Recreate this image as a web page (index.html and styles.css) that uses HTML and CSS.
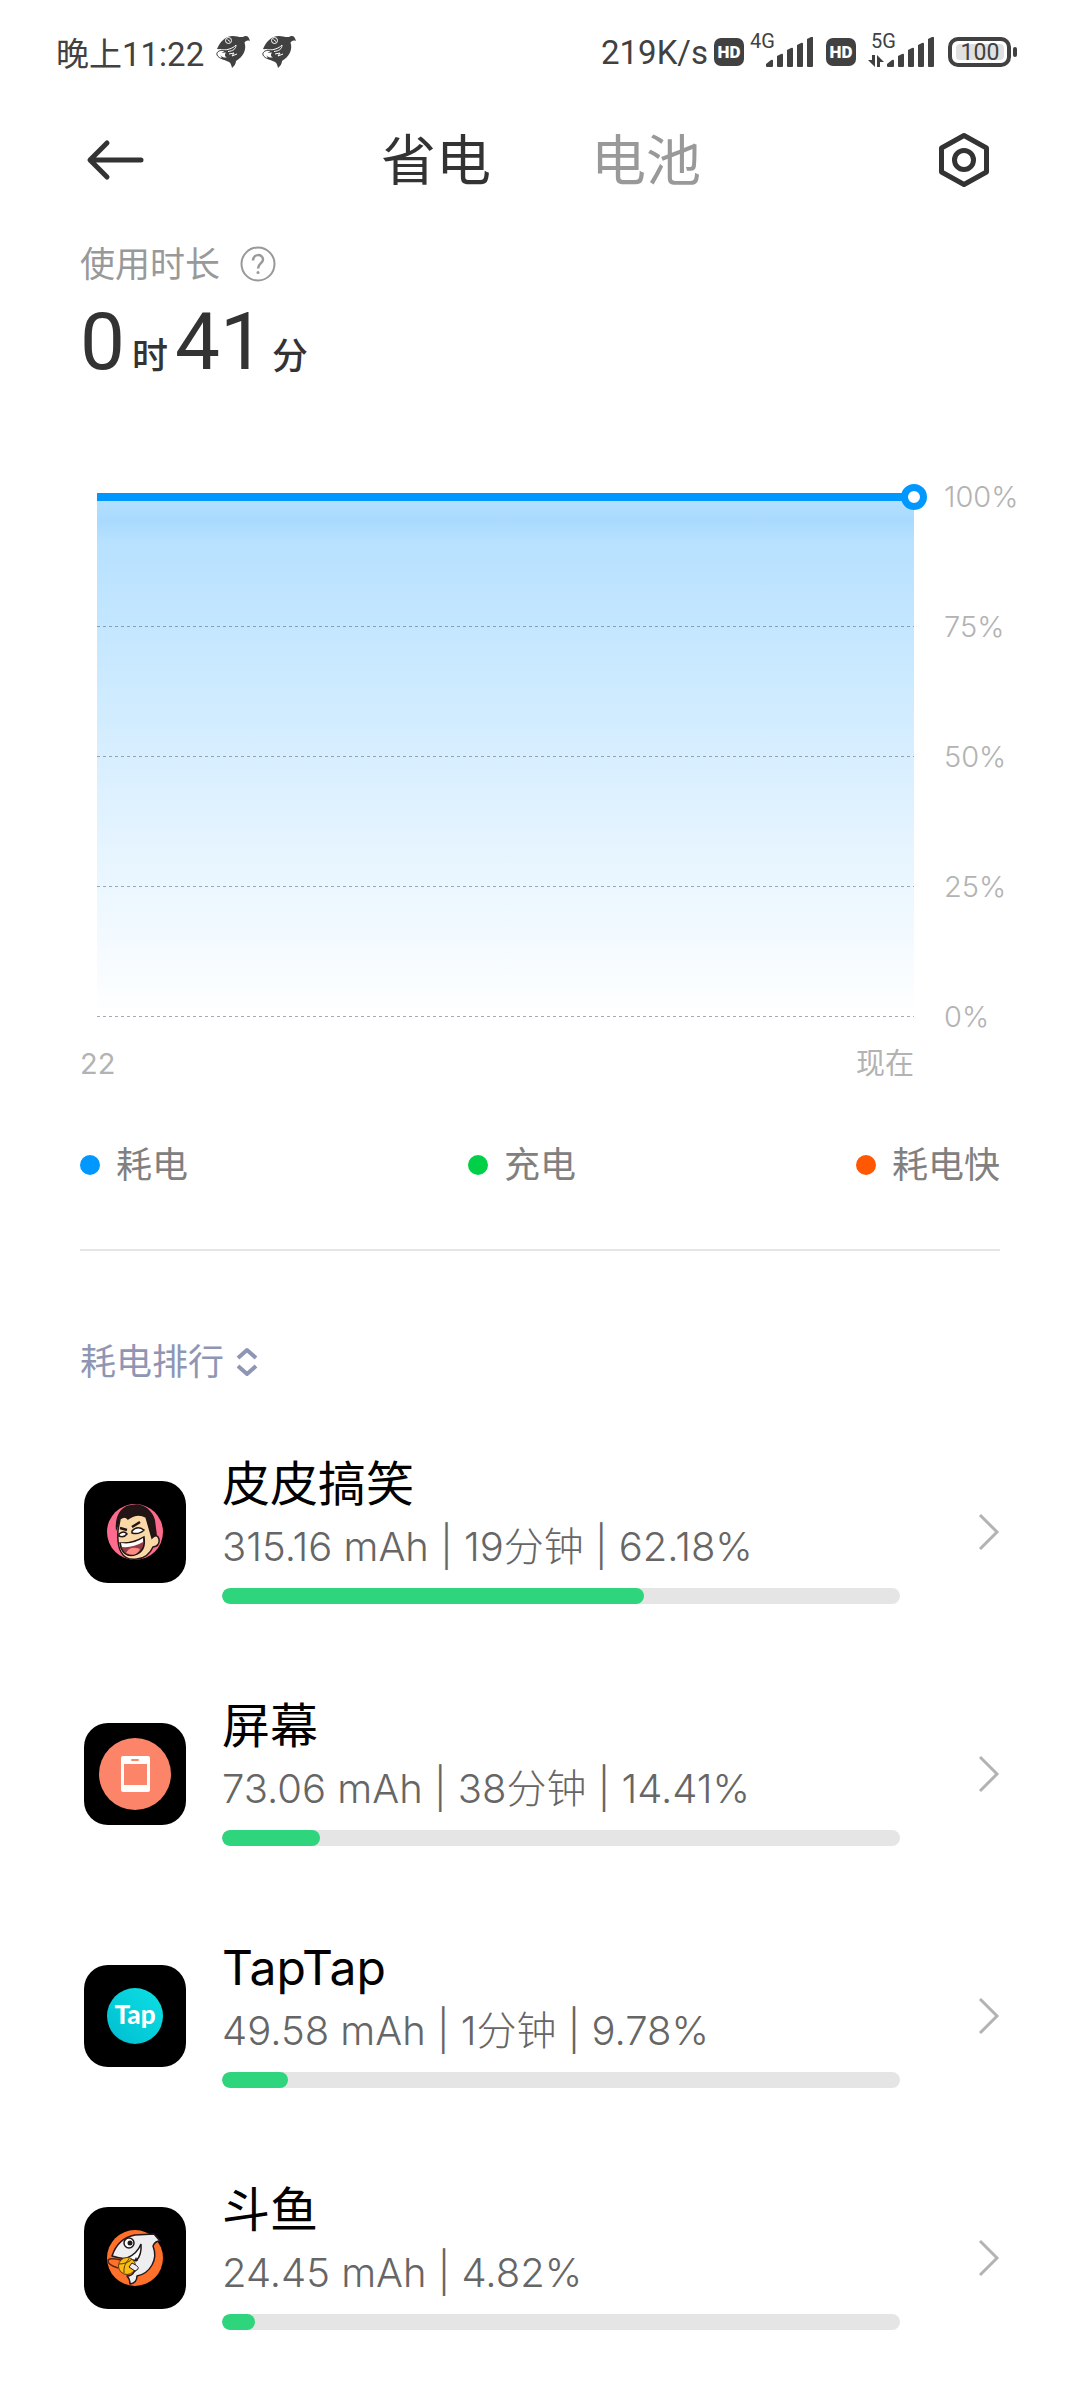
FILE: index.html
```
<!DOCTYPE html>
<html lang="zh-CN">
<head>
    <meta charset="UTF-8">
    <meta name="viewport" content="width=device-width, initial-scale=1.0">
    <title>省电</title>
    <link rel="stylesheet" href="styles.css">
</head>
<body>

<!-- shared shapes -->
<svg class="defs" width="0" height="0" aria-hidden="true">
    <symbol id="shark" viewBox="0 0 34 34">
        <path fill="#414141" d="M1 14C4 7 9 1 17 1C21 1 25 3 28 1.500C31 0 33 2 34 6C31 5 30 6 28.500 7.500C31 15 27 22 20 26C20 29 18 31 16 33C15.500 31 15 28 13 27L6 24L4 19L10 15Z"/>
        <circle cx="12.500" cy="5.500" r="3" fill="#414141" stroke="#fff"/>
        <path d="M11.500 4.500l2.500 2" stroke="#fff"/>
        <path d="M3 14.500C10 16 17 13.500 20 10C20 14 17 16 12 16.500" fill="none" stroke="#fff"/>
        <path d="M10 16C4 14 0 17 1 20C3 24 9 25 15 24" fill="none" stroke="#414141"/>
        <path d="M4 18C3 21 7 23 11 22.500C8 21 9 19 10 17.500Z" fill="#fff"/>
        <path d="M13 19l5-1-2 3 5-2" fill="none" stroke="#fff"/>
    </symbol>
    <symbol id="bars" viewBox="0 0 48 31">
        <path fill="#414141" d="M0 27l5-4q2-1 2 1v5q0 1-1 1H1q-1 0-1-1zM11 19l4-2q2-1 2 1v11q0 1-1 1h-4q-1 0-1-1zM21 13l4-2q2-1 2 1v17q0 1-1 1h-4q-1 0-1-1zM31 8l4-2q2-1 2 1v22q0 1-1 1h-4q-1 0-1-1zM41 2l4-2q2-1 2 1v28q0 1-1 1h-4q-1 0-1-1z"/>
    </symbol>
    <symbol id="chevron" viewBox="0 0 22 38">
        <path d="M2 2l17 17L2 36" fill="none" stroke="#b3b3b3" stroke-width="3"/>
    </symbol>
</svg>

<div class="status-bar">
    <div class="status-left">
        <span>晚上11:22</span>
        <svg width="34" height="34"><use href="#shark"/></svg>
        <svg width="34" height="34"><use href="#shark"/></svg>
    </div>
    <div class="status-right">
        <div class="sim">
            <span>219K/s</span>
            <span class="hd">HD</span>
            <svg class="signal" width="64" height="48" viewBox="0 0 64 48">
                <text x="0" y="20">4G</text>
                <use href="#bars" x="16" y="9" width="48" height="31"/>
            </svg>
        </div>
        <span class="hd">HD</span>
        <svg class="signal" width="68" height="48" viewBox="0 0 68 48">
            <text x="3" y="20">5G</text>
            <path fill="#414141" d="M4 27h3v12L0 32h4zM9 39V27l7 7h-4v5z"/>
            <use href="#bars" x="19" y="9" width="48" height="31"/>
        </svg>
        <svg class="battery" width="70" height="32" viewBox="0 0 70 32">
            <rect x="2" y="3" width="59" height="26" rx="8" fill="#fff" stroke="#414141" stroke-width="4"/>
            <rect x="8" y="8" width="48" height="16" rx="4" fill="#e0e0e0"/>
            <rect x="65" y="11" width="4" height="10" rx="2" fill="#414141"/>
            <text x="32" y="24" text-anchor="middle">100</text>
        </svg>
    </div>
</div>

<header class="header">
    <button class="icon-button" aria-label="返回">
        <svg width="60" height="44" viewBox="0 0 60 44">
            <path d="M22 5L5 22l17 17M6 22h50" fill="none" stroke="#333" stroke-width="5" stroke-linecap="round" stroke-linejoin="round"/>
        </svg>
    </button>
    <nav class="tabs">
        <button class="tab active">省电</button>
        <button class="tab">电池</button>
    </nav>
    <button class="icon-button" aria-label="设置">
        <svg width="54" height="58" viewBox="0 0 54 58">
            <path d="M27 4.500L49.500 17V41L27 53.500L4.500 41V17Z" fill="none" stroke="#333" stroke-width="5" stroke-linejoin="round"/>
            <circle cx="27" cy="29" r="9.500" fill="none" stroke="#333" stroke-width="5"/>
        </svg>
    </button>
</header>

<main class="content">
    <section class="usage">
        <div class="usage-label">
            <span>使用时长</span>
            <button class="icon-button" aria-label="说明">
                <svg width="36" height="36" viewBox="0 0 36 36" fill="none" stroke="#999" stroke-width="2">
                    <circle cx="18" cy="18" r="16.500"/>
                    <path d="M13 14.500c0-7 10-7 10-1 0 4-5 4-5 9" stroke-width="2.500"/>
                    <circle cx="18" cy="26.500" r="1.500" fill="#999" stroke="none"/>
                </svg>
            </button>
        </div>
        <div class="usage-time"><b>0</b><span>时</span><b>41</b><span>分</span></div>
    </section>

    <section class="chart">
        <div class="plot">
            <div class="plot-row"></div>
            <div class="plot-row"></div>
            <div class="plot-row"></div>
            <div class="plot-row"></div>
            <span class="plot-dot"></span>
        </div>
        <div class="y-axis">
            <span>100%</span>
            <span>75%</span>
            <span>50%</span>
            <span>25%</span>
            <span>0%</span>
        </div>
    </section>
    <div class="x-axis"><span>22</span><span>现在</span></div>

    <div class="legend">
        <span class="legend-item blue">耗电</span>
        <span class="legend-item green">充电</span>
        <span class="legend-item orange">耗电快</span>
    </div>

    <section class="ranking">
        <button class="sort-button">
            耗电排行
            <svg width="22" height="30" viewBox="0 0 22 30">
                <path d="M2 11l9-8 9 8M2 19l9 8 9-8" fill="none" stroke="#8f96b4" stroke-width="4" stroke-linejoin="round"/>
            </svg>
        </button>

        <a class="app" href="#">
            <svg class="app-icon" viewBox="0 0 102 102">
                <circle cx="51" cy="51" r="28" fill="#ff6b8e"/>
                <path d="M32 50C30 33 39 24 48 24C57 21 68 28 71 39L73 55L69 66H60L35 43Z" fill="#211516"/>
                <path d="M34 49L36 38Q41 34 44 38Q53 31 62 36L68 57Q73 52 75 58Q76 65 69 66Q64 77 53 78Q42 80 37 71Q33 64 34 49Z" fill="#fbd9a7" stroke="#211516" stroke-width="1.500"/>
                <path d="M36 47l7 2M48 46l8-5" fill="none" stroke="#211516" stroke-width="2.500"/>
                <path d="M35 53q5-4 8 0-3 4-8 2zM48 50q5-6 12-1-5 5-12 3z" fill="#fff" stroke="#211516" stroke-width="1.500"/>
                <path d="M36 62Q48 63 60 56Q62 69 53 73Q42 78 37 67Z" fill="#963c45" stroke="#211516" stroke-width="1.500"/>
                <path d="M37 62Q49 64 59 57L59 61Q49 67 38 66Z" fill="#fff"/>
                <path d="M42 72Q46 64 56 68Q52 77 42 72Z" fill="#ff8a84"/>
            </svg>
            <div class="app-info">
                <div class="app-name">皮皮搞笑</div>
                <div class="app-detail">315.16 mAh | 19分钟 | 62.18%</div>
                <div class="bar"><div class="bar-fill" style="width: 62.18%"></div></div>
            </div>
            <svg class="chevron"><use href="#chevron"/></svg>
        </a>

        <a class="app" href="#">
            <svg class="app-icon" viewBox="0 0 102 102">
                <circle cx="51" cy="51" r="36" fill="#fb8469"/>
                <rect x="37" y="33" width="29" height="36" rx="2" fill="#fff"/>
                <rect x="40" y="41" width="23" height="21" fill="#fb8469"/>
                <rect x="47" y="36" width="8" height="2" rx="1" fill="#fb8469"/>
            </svg>
            <div class="app-info">
                <div class="app-name">屏幕</div>
                <div class="app-detail">73.06 mAh | 38分钟 | 14.41%</div>
                <div class="bar"><div class="bar-fill" style="width: 14.41%"></div></div>
            </div>
            <svg class="chevron"><use href="#chevron"/></svg>
        </a>

        <a class="app" href="#">
            <svg class="app-icon" viewBox="0 0 102 102">
                <linearGradient id="tap" x1="0" y1="1" x2="1" y2="0">
                    <stop offset="0" stop-color="#00bdd0"/>
                    <stop offset="1" stop-color="#0de0e4"/>
                </linearGradient>
                <circle cx="51" cy="51" r="28" fill="url(#tap)"/>
                <text class="tap-text" x="51" y="59" text-anchor="middle">Tap</text>
            </svg>
            <div class="app-info">
                <div class="app-name">TapTap</div>
                <div class="app-detail">49.58 mAh | 1分钟 | 9.78%</div>
                <div class="bar"><div class="bar-fill" style="width: 9.78%"></div></div>
            </div>
            <svg class="chevron"><use href="#chevron"/></svg>
        </a>

        <a class="app" href="#">
            <svg class="app-icon" viewBox="0 0 102 102">
                <circle cx="51" cy="51" r="28" fill="#ff702a"/>
                <path d="M28 49Q34 31 51 28L70 27L76 34Q71 34 69 39Q73 49 68 58Q63 67 53 69Q53 76 46 77Q46 72 43 69Q48 69 50 65L53 62Q46 64 42 56L43 52Q34 51 28 49Z" fill="#eeeef0" stroke="#22191a" stroke-width="1.500" stroke-linejoin="round"/>
                <path d="M43 51Q53 47 57 37Q58 48 52 54Z" fill="#fff" stroke="#22191a" stroke-width="1.500"/>
                <circle cx="45" cy="36" r="5" fill="#fff" stroke="#22191a" stroke-width="1.500"/>
                <circle cx="46" cy="36" r="2.500" fill="#22191a"/>
                <path d="M50 54l2-4 2 4" fill="#22191a"/>
                <circle cx="43" cy="59" r="8.500" fill="#f9bd10" stroke="#5b3a10" stroke-width="1"/>
                <path d="M35 57q8 0 13-5M40 66q-1-8 5-14" fill="none" stroke="#5b3a10"/>
                <path d="M48 56Q59 61 51 64L45 60Z" fill="#eeeef0" stroke="#22191a" stroke-width="1"/>
                <path d="M37 53Q24 50 24 54Q24 58 34 61" fill="none" stroke="#5b2410" stroke-width="1.500"/>
            </svg>
            <div class="app-info">
                <div class="app-name">斗鱼</div>
                <div class="app-detail">24.45 mAh | 4.82%</div>
                <div class="bar"><div class="bar-fill" style="width: 4.82%"></div></div>
            </div>
            <svg class="chevron"><use href="#chevron"/></svg>
        </a>
    </section>
</main>

</body>
</html>
```

FILE: styles.css
```
:root {
    --text: #333;
    --muted: #999;
    --axis: #b3b3b3;
    --status: #414141;
    --blue: #0098ff;
    --green: #2ed57c;
}

* {
    box-sizing: border-box;
}

body {
    margin: 0;
    background-color: #fff;
    color: var(--text);
    font-family: Inter, "Noto Sans CJK SC", sans-serif;
}

button {
    border: none;
    padding: 0;
    background: none;
    font-family: inherit;
    cursor: pointer;
}

svg {
    display: block;
    flex-shrink: 0;
}

.defs {
    position: absolute;
}

/* Status bar */
.status-bar {
    display: flex;
    justify-content: space-between;
    align-items: center;
    height: 104px;
    padding: 0 62px 0 56px;
    color: var(--status);
    font-family: Roboto, "Noto Sans CJK SC", sans-serif;
    font-size: 33px;
}

.status-left {
    display: flex;
    align-items: center;
    gap: 12px;
}

.status-right {
    display: flex;
    align-items: center;
    gap: 12px;
}

.sim {
    display: flex;
    align-items: center;
    gap: 6px;
}

.hd {
    width: 30px;
    border-radius: 7px;
    background-color: var(--status);
    color: #fff;
    font-size: 17px;
    font-weight: 900;
    line-height: 28px;
    text-align: center;
}

.signal {
    fill: var(--status);
    font-size: 20px;
}

.battery {
    fill: var(--status);
    font-size: 23px;
}

/* Header */
.header {
    display: flex;
    justify-content: space-between;
    align-items: center;
    height: 112px;
    padding: 0 89px 0 85px;
}

.tabs {
    display: flex;
    gap: 100px;
}

.tab {
    color: var(--muted);
    font-size: 55px;
    line-height: 80px;
}

.tab.active {
    color: var(--text);
}

.content {
    padding: 0 80px;
}

/* Usage time */
.usage {
    padding-top: 24px;
}

.usage-label {
    display: flex;
    align-items: center;
    gap: 20px;
    color: var(--muted);
    font-size: 35px;
    line-height: 48px;
}

.usage-time {
    display: flex;
    align-items: baseline;
    gap: 7px;
    height: 144px;
    font-size: 36px;
    font-weight: 500;
    line-height: 108px;
}

.usage-time b {
    font-family: Roboto, sans-serif;
    font-size: 80px;
    font-weight: 400;
}

/* Chart */
.chart {
    display: flex;
    gap: 30px;
    margin-right: -80px;
    padding-left: 17px;
}

.plot {
    position: relative;
    flex: 1;
    height: 525px;
    margin-top: 61px;
    border-top: 8px solid var(--blue);
    background: linear-gradient(#b2dfff, #a9dafe 20px, #b7e1ff 40px, #fff);
}

.plot-row {
    height: 130px;
    background: repeating-linear-gradient(90deg, rgba(70, 90, 110, .5) 0 3px, transparent 3px 6px) bottom / 100% 1px no-repeat;
}

.plot-row:first-child {
    height: 126px;
}

.plot-dot {
    position: absolute;
    top: -17px;
    right: -13px;
    width: 26px;
    height: 26px;
    border: 7px solid var(--blue);
    border-radius: 50%;
    background-color: #fff;
}

.y-axis {
    display: flex;
    flex-direction: column;
    width: 136px;
    color: var(--axis);
    font-size: 29px;
    font-weight: 300;
    line-height: 130px;
}

.x-axis {
    display: flex;
    justify-content: space-between;
    margin-top: -40px;
    padding-right: 86px;
    color: var(--axis);
    font-size: 29px;
    line-height: 44px;
}

/* Legend */
.legend {
    display: flex;
    justify-content: space-between;
    padding: 54px 0 59px;
    border-bottom: 2px solid #e5e5e5;
    color: #808080;
    font-size: 36px;
    line-height: 50px;
}

.legend-item {
    display: flex;
    align-items: center;
    gap: 16px;
}

.legend-item::before {
    content: "";
    width: 20px;
    height: 20px;
    border-radius: 50%;
    background-color: currentColor;
}

.legend-item.blue::before {
    background-color: var(--blue);
}

.legend-item.green::before {
    background-color: #00d048;
}

.legend-item.orange::before {
    background-color: #ff5800;
}

/* Ranking */
.ranking {
    padding-top: 86px;
}

.sort-button {
    display: flex;
    align-items: center;
    gap: 12px;
    color: #8f96b4;
    font-size: 36px;
    line-height: 50px;
}

.app {
    display: flex;
    align-items: center;
    height: 242px;
    padding-left: 4px;
    color: #000;
    text-decoration: none;
}

.ranking .sort-button + .app {
    margin-top: 24px;
}

.app-icon {
    width: 102px;
    height: 102px;
    border-radius: 24px;
    background-color: #000;
}

.tap-text {
    fill: #fff;
    font-family: Lato, sans-serif;
    font-size: 26px;
    font-weight: 900;
}

.app-info {
    flex: 1;
    margin: 0 78px 0 36px;
    padding-bottom: 8px;
}

.app-name {
    font-size: 48px;
    line-height: 64px;
}

.app-detail {
    color: #666;
    font-size: 40px;
    font-weight: 300;
    line-height: 62px;
}

.bar {
    height: 16px;
    margin-top: 10px;
    border-radius: 8px;
    background-color: #e5e5e5;
    overflow: hidden;
}

.bar-fill {
    height: 100%;
    border-radius: 8px;
    background-color: var(--green);
}

.chevron {
    width: 22px;
    height: 38px;
}
```
